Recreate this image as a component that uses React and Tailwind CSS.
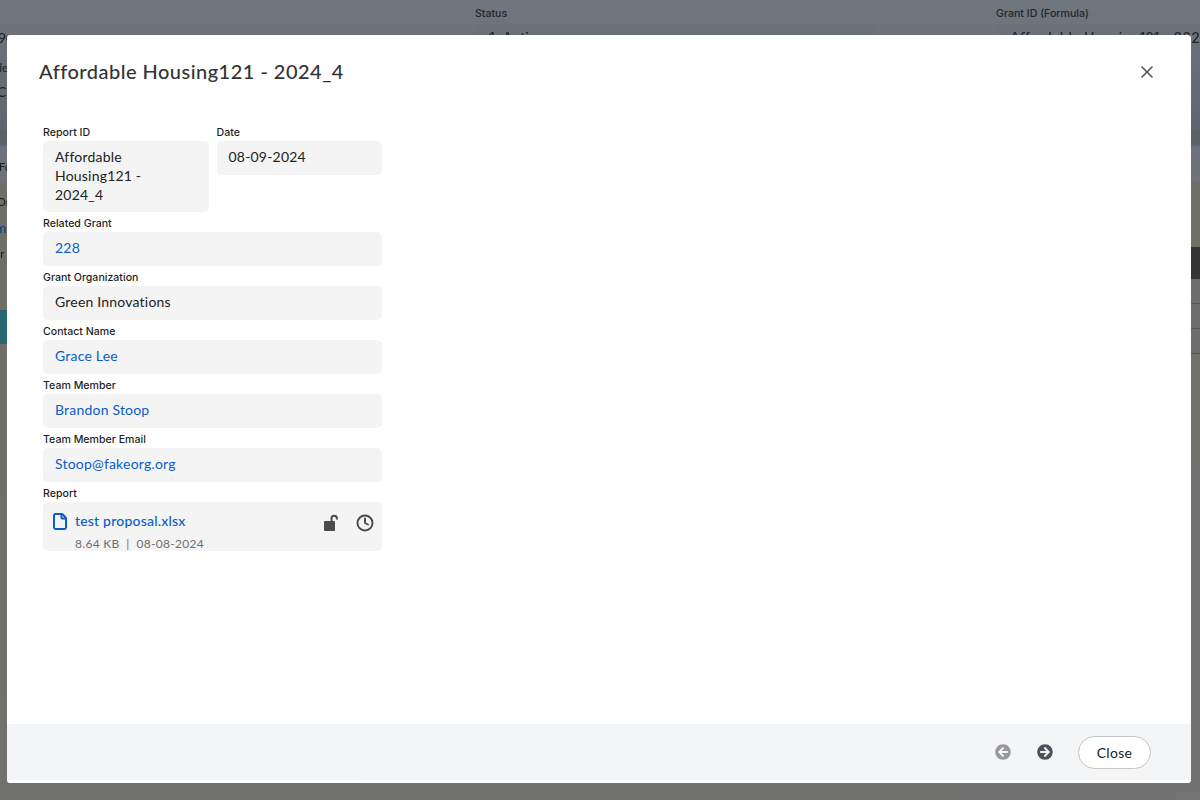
import React from "react";
import { X, Clock, File } from "lucide-react";
import { FaArrowCircleLeft, FaArrowCircleRight } from "react-icons/fa";

const font = { fontFamily: 'Lato, "Noto Sans", sans-serif' };

function FieldLabel({ children }) {
  return (
    <div className="h-[20px] pt-[4px] text-[10.6px] font-medium leading-[16px] text-[#1f1f1f] font-['Inter',sans-serif]">
      {children}
    </div>
  );
}

function Field({ label, children }) {
  return (
    <div>
      <FieldLabel>{label}</FieldLabel>
      <div className="min-h-[34px] rounded-[5px] bg-[#f4f4f4] px-3 pb-[8px] pt-[6px] text-[14px] leading-[19px] tracking-[0.2px] text-[#222]">
        {children}
      </div>
    </div>
  );
}

function LinkText({ children }) {
  return <span className="text-[#0b5cc7]">{children}</span>;
}

// 페이지 뒤 배경 (모달에 가려지는 부분)
function Backdrop() {
  return (
    <div className="flex h-[800px] w-[1200px] flex-col overflow-hidden bg-[#6f6f68] text-[#1d1f22]">
      <div className="h-[130px] bg-gradient-to-b from-[#70777f] to-[#5f656d]">
        <div className="flex h-[35px] pt-[7px] text-[10.6px] font-medium leading-[14px] text-[#23262a] font-['Inter',sans-serif]">
          <div className="w-[475px]"></div>
          <div className="w-[521px]">
            Status
            <div className="mt-[3px] h-[20px] w-[400px] bg-[#6b7179] pl-[14px] pt-[5px] text-[14px] leading-[18px] blur-[0.5px]">1. Active</div>
          </div>
          <div>
            Grant ID (Formula)
            <div className="mt-[3px] h-[20px] w-[204px] overflow-hidden bg-[#6b7179] pl-[14px] pt-[5px] text-[14px] leading-[18px] whitespace-nowrap blur-[0.5px]">Affordable Housing121 - 2024_4</div>
          </div>
        </div>
      </div>
      <div className="h-[17px] border-b-2 border-[#56707f] bg-[#5f6168]"></div>
      <div className="h-[34px] bg-[#70727a]"></div>
      <div className="h-[129px]"></div>
      <div className="h-[34px] w-[7px] bg-[#26666e]"></div>
      <div className="flex-1 bg-gradient-to-br from-[#6f6f68] to-[#737373]"></div>
    </div>
  );
}

function RightStrip() {
  return (
    <div className="absolute right-0 top-[247px] flex w-[9px] flex-col">
      <div className="h-[32px] bg-[#343434]"></div>
      <div className="h-[25px] border-b border-[#565656] bg-[#6d6d6d]"></div>
      <div className="h-[25px] border-b border-[#565656] bg-[#6d6d6d]"></div>
      <div className="h-[25px] border-b border-[#565656] bg-[#6d6d6d]"></div>
    </div>
  );
}

function LeftFragments() {
  return (
    <div className="absolute left-0 top-0 w-[7px] overflow-hidden text-[14px] leading-[18px] text-[#1d1f22] blur-[0.4px]">
      <div className="h-[29px]"></div>
      <div className="h-[30px] -ml-[2px]">90</div>
      <div className="h-[24px] text-[11px] -ml-[4px]">de</div>
      <div className="h-[75px] -ml-[3px]">C</div>
      <div className="h-[35px] text-[11px] -ml-[1px]">Fo</div>
      <div className="h-[26px] text-[11px] -ml-[3px]">Or</div>
      <div className="h-[26px] -ml-[5px] text-[#0b3f86]">m</div>
      <div className="text-[11px] -ml-[6px]">or</div>
    </div>
  );
}

export default function App() {
  return (
    <div className="relative h-[800px] w-[1200px] overflow-hidden" style={font}>
      <Backdrop />
      <RightStrip />
      <LeftFragments />

      {/* 모달 */}
      <div className="absolute left-[7px] top-[35px] flex h-[748px] w-[1184px] flex-col overflow-hidden rounded-[3px] bg-white">
        <div className="flex items-center justify-between pl-[32px] pr-[34px] pt-[21px]">
          <h2 className="text-[20px] font-medium leading-[30px] tracking-[0.48px] text-[#333]">
            Affordable Housing121 - 2024_4
          </h2>
          <X className="mt-[2px] h-[20px] w-[20px] text-[#55585c]" strokeWidth={2} />
        </div>

        <div className="flex-1 pl-[36px] pt-[35px]">
          <div className="w-[339px]">
            <div className="grid grid-cols-2 items-start gap-x-2">
              <Field label="Report ID">
                Affordable
                <br />
                Housing121 -
                <br />
                2024_4
              </Field>
              <Field label="Date">08-09-2024</Field>
            </div>
            <Field label="Related Grant"><LinkText>228</LinkText></Field>
            <Field label="Grant Organization">Green Innovations</Field>
            <Field label="Contact Name"><LinkText>Grace Lee</LinkText></Field>
            <Field label="Team Member"><LinkText>Brandon Stoop</LinkText></Field>
            <Field label="Team Member Email"><LinkText>Stoop@fakeorg.org</LinkText></Field>
            <div>
              <FieldLabel>Report</FieldLabel>
              <div className="flex h-[49px] items-start justify-between overflow-hidden rounded-[5px] bg-[#f4f4f4] px-[8px]">
                <div className="flex gap-[6px] pt-[10px]">
                  <File className="h-[19px] w-[18px] text-[#0b5cc7]" strokeWidth={2.6} />
                  <div>
                    <div className="text-[14px] font-medium leading-[18px] tracking-[0.2px] text-[#0b5cc7]">test proposal.xlsx</div>
                    <div className="mt-[6px] text-[12px] leading-[15px] tracking-[0.3px] text-[#6f6f6f]">8.64 KB&nbsp; |&nbsp; 08-08-2024</div>
                  </div>
                </div>
                <div className="flex items-center gap-[16px] pt-[12px]">
                  <svg width="16" height="18" viewBox="0 0 16 18" className="text-[#4a4a4f]">
                    <rect x="0" y="7" width="11" height="10" rx="1" fill="currentColor" />
                    <path d="M7.5 8V4.5a2.7 2.7 0 0 1 5.4 0v1" fill="none" stroke="currentColor" strokeWidth="2" />
                  </svg>
                  <Clock className="h-[18px] w-[18px] text-[#4a4a4f]" strokeWidth={2.6} />
                </div>
              </div>
            </div>
          </div>
        </div>

        <div className="mb-[3px] flex h-[56px] items-center justify-end bg-[#f4f5f7] pr-[40px]">
          <FaArrowCircleLeft className="h-[16px] w-[16px] text-[#98989c]" />
          <FaArrowCircleRight className="ml-[26px] h-[16px] w-[16px] text-[#4f4f57]" />
          <button className="ml-[25px] h-[33px] w-[73px] rounded-full border border-[#c4c4c4] bg-white text-[14px] tracking-[0.3px] text-[#222]">
            Close
          </button>
        </div>
      </div>
    </div>
  );
}
